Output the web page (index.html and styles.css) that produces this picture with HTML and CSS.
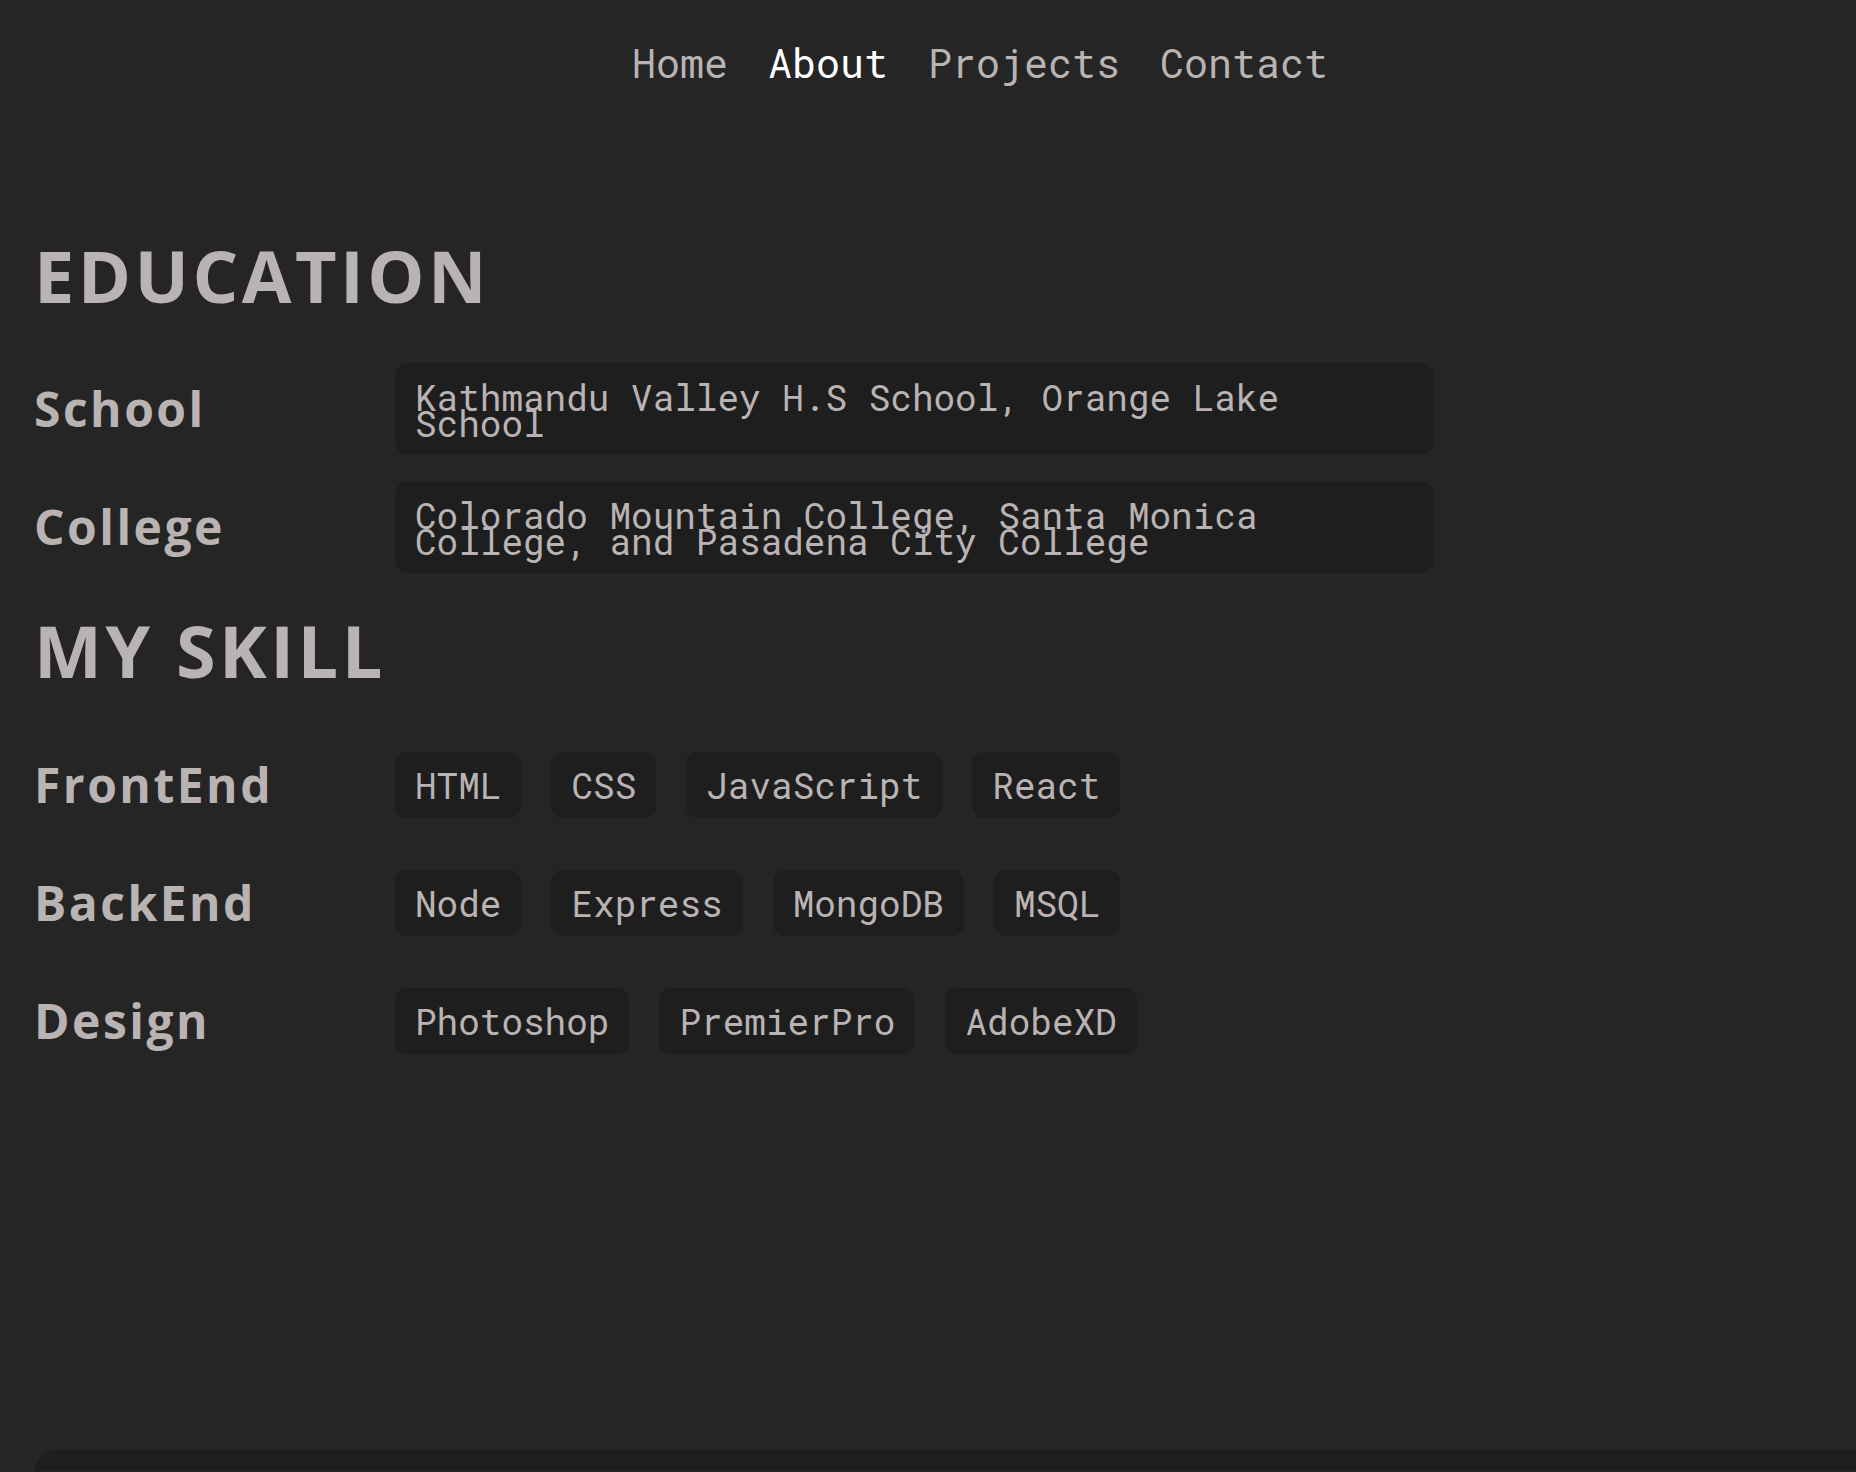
FILE: index.html
```html
<!DOCTYPE html>
<html lang="en">
<head>
<meta charset="utf-8">
<title>About</title>
<link rel="stylesheet" href="styles.css">
</head>
<body>
<nav class="nav">
  <ul class="nav-list">
    <li><a class="nav-link" href="#">Home</a></li>
    <li><a class="nav-link nav-link--active" href="#">About</a></li>
    <li><a class="nav-link" href="#">Projects</a></li>
    <li><a class="nav-link" href="#">Contact</a></li>
  </ul>
</nav>
<main class="content">
  <section class="education">
    <h2 class="section-title">EDUCATION</h2>
    <div class="info-list">
      <div class="info-row">
        <h3 class="row-label">School</h3>
        <p class="info-box">Kathmandu Valley H.S School, Orange Lake School</p>
      </div>
      <div class="info-row">
        <h3 class="row-label">College</h3>
        <p class="info-box">Colorado Mountain College, Santa Monica College, and Pasadena City College</p>
      </div>
    </div>
  </section>
  <section class="skills">
    <h2 class="section-title section-title--skills">MY SKILL</h2>
    <div class="skill-list">
      <div class="skill-row">
        <h3 class="row-label">FrontEnd</h3>
        <ul class="tags">
          <li class="tag">HTML</li>
          <li class="tag">CSS</li>
          <li class="tag">JavaScript</li>
          <li class="tag">React</li>
        </ul>
      </div>
      <div class="skill-row">
        <h3 class="row-label">BackEnd</h3>
        <ul class="tags">
          <li class="tag">Node</li>
          <li class="tag">Express</li>
          <li class="tag">MongoDB</li>
          <li class="tag">MSQL</li>
        </ul>
      </div>
      <div class="skill-row">
        <h3 class="row-label">Design</h3>
        <ul class="tags">
          <li class="tag">Photoshop</li>
          <li class="tag">PremierPro</li>
          <li class="tag">AdobeXD</li>
        </ul>
      </div>
    </div>
  </section>
</main>
<footer class="footer-bar"></footer>
</body>
</html>
```
FILE: styles.css
```css
html, body {
  margin: 0;
  padding: 0;
  overflow: hidden;
}

body {
  background: #252525;
  color: #bab3b3;
  font-family: "Open Sans", "Noto Sans", sans-serif;
}

.nav {
  padding: 39px 0 0 104px;
}

.nav-list {
  list-style: none;
  margin: 0;
  padding: 0;
  display: flex;
  justify-content: center;
  gap: 40px;
}

.nav-link {
  font-family: "Roboto Mono", "DejaVu Sans Mono", monospace;
  font-size: 40px;
  line-height: 47px;
  color: #bab3b3;
  text-decoration: none;
}

.nav-link--active {
  color: #ffffff;
}

.content {
  padding: 0 0 0 34px;
}

.section-title {
  margin: 146px 0 0;
  font-size: 72px;
  line-height: 86px;
  font-weight: 700;
  letter-spacing: 0.048em;
  color: #bab3b3;
}

.section-title--skills {
  margin-top: 34px;
}

.info-list {
  margin-top: 45px;
  display: flex;
  flex-direction: column;
  gap: 26px;
}

.info-row,
.skill-row {
  display: grid;
  grid-template-columns: 361px 1039px;
  align-items: center;
}

.row-label {
  margin: 0;
  font-size: 48px;
  line-height: 56px;
  font-weight: 700;
  letter-spacing: 0.052em;
  color: #bab3b3;
}

.info-box {
  margin: 0;
  box-sizing: border-box;
  padding: 21px 20px 19px;
  background: #1e1e1e;
  border-radius: 14px;
  font-family: "Roboto Mono", "DejaVu Sans Mono", monospace;
  font-size: 36px;
  line-height: 26px;
  color: #bab3b3;
}

.skill-list {
  margin-top: 59px;
  display: flex;
  flex-direction: column;
  gap: 52px;
}

.tags {
  list-style: none;
  margin: 0;
  padding: 0;
  display: flex;
  gap: 30px;
}

.tag {
  padding: 10px 20px;
  background: #1e1e1e;
  border-radius: 12px;
  font-family: "Roboto Mono", "DejaVu Sans Mono", monospace;
  font-size: 36px;
  line-height: 46px;
  color: #bab3b3;
}

.footer-bar {
  margin: 396px -60px 0 35px;
  height: 21px;
  background: #1e1e1e;
  border-radius: 20px 0 0 0;
}
```
